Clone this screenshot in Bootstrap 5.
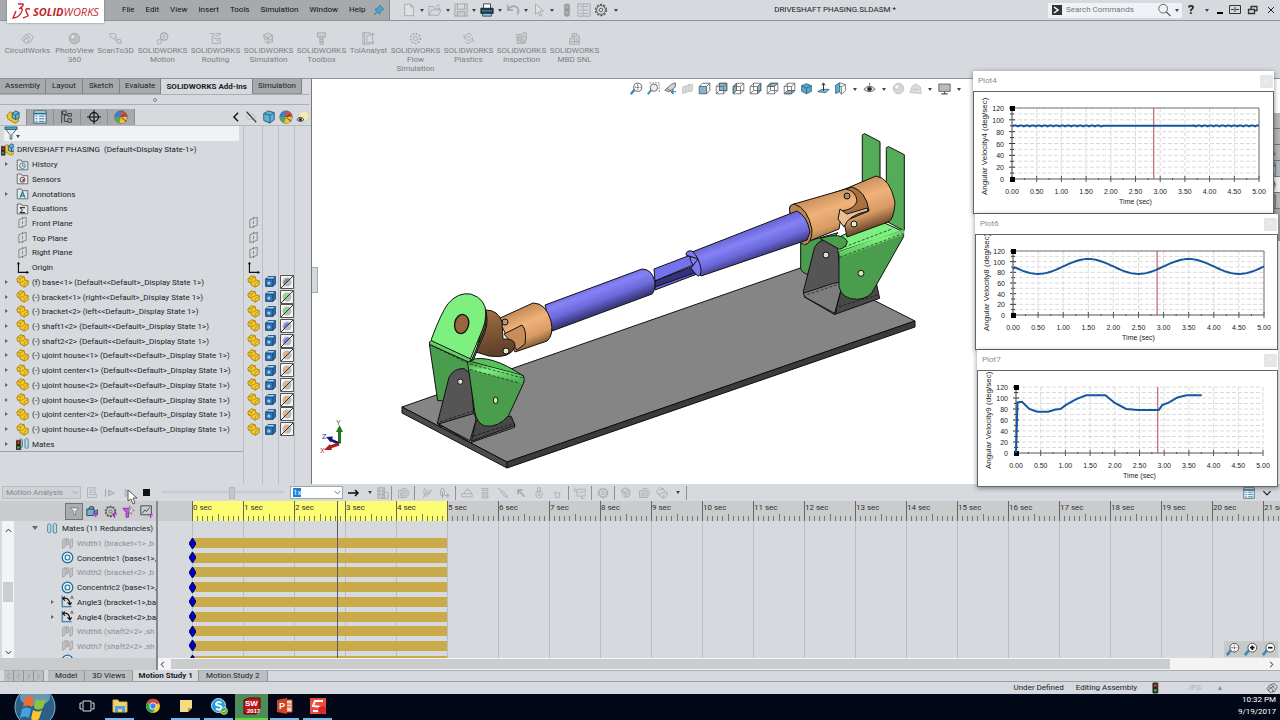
<!DOCTYPE html>
<html lang="en">
<head>
<meta charset="utf-8">
<meta name="viewport" content="width=device-width, initial-scale=1">
<title>DRIVESHAFT PHASING.SLDASM</title>
<link href="https://cdn.jsdelivr.net/npm/bootstrap@5.3.0/dist/css/bootstrap.min.css" rel="stylesheet">
<style>
:root{--face:#d6d9de;--dark:#a6aaac;--line:#8f9498;--ui:Roboto,"Liberation Sans",sans-serif}
body{font-family:var(--ui);font-size:8px;line-height:10px;color:#222;background:var(--face);overflow-x:hidden}
button,input,select{font:inherit;color:inherit}
.plain{border:0;background:none;padding:0;line-height:10px}
svg{display:block;flex:none}
.ic{width:14px;height:14px;fill:none;stroke:#555;stroke-width:1}
.off{opacity:.38}
.cell{width:13px;display:flex;align-items:center;justify-content:center}
.cell.wide{width:17px}
.cell.mid{width:18px}
.dd::after{content:"";display:block;border:2px solid transparent;border-top:3px solid #444;border-bottom:0}
a{color:inherit;text-decoration:none}

.topbar{height:21px;border-bottom:1px solid var(--line)}
.menus{width:390px;height:20px;background:var(--dark);border-right:1px solid #888;color:#111}
.brand{width:97px;height:23px;margin-left:7px;background:#fff;box-shadow:0 0 2px #777;color:#c4262c;font-family:"Open Sans",sans-serif;font-size:11px;line-height:14px;font-style:italic;z-index:2}
.menus nav{gap:11px;padding-left:18px}
.find{width:134px;height:15px;background:#eef1f5}
.find input{border:0;background:none;width:90px;padding:0;outline:0}
.help{font-size:13px;font-weight:700}
.ribbon{height:58px;border-bottom:1px solid var(--line);padding:11px 0 0 1px}
.ribbon button{width:53px;color:#7d8083;line-height:9px}
.ribbon button.slim{width:41px}
.ribbon .ic{opacity:.4}

.side{width:312px;border-right:1px solid #777}
.cmtabs{height:15px;padding-right:9px}
.cmtabs button{background:var(--dark);border-right:1px solid #7d8285;border-bottom:1px solid #8f9396;padding:0 5px}
.cmtabs button:nth-child(2),.cmtabs button:nth-child(3){padding:0 6px}
.cmtabs button.on{background:var(--face);border-bottom:0;font-weight:700;flex:1;padding:0}
.strip{height:11px;border-top:1px solid #a9afba;border-bottom:1px solid #a9afba;margin-right:2px}
.strip i{width:4px;height:4px;border:1px solid #888;border-radius:50%}
.fmtabs{height:21px;padding-top:4px;border-bottom:1px solid #b5b9bd}
.fmtabs .pt{width:27px;background:var(--dark);border-right:1px solid #8c9093}
.fmtabs .pt.on{background:var(--face)}
.cols{display:grid;grid-template-columns:243px 19px 16px 16px 17px}
.cols>*+*{border-left:1px solid #bcc0c5;display:flex;align-items:center;justify-content:center}
.filter{height:16px}
.filter input{border:0;outline:0;background:#f1f2f3;width:100%;padding:0 0 0 20px;height:15px}
.filter .dd{left:16px;top:9px}
.tree{height:309px}
.tree .cols{flex:1 1 0;min-height:0}
.tree .nm{display:flex;align-items:center;white-space:pre;min-width:0}
.tree .ic{width:13px;height:13px}
.tree .root{padding-left:1px}
.exp{width:16px;padding-left:5px}
.exp.has::before{content:"";display:block;width:0;border:2px solid transparent;border-left:3px solid #666;border-right:0}
.lbl{margin-left:3px;padding-top:2px}
.treeend{border-top:1px solid #9da0ae}
.handle{left:0;top:188px;width:6px;height:26px;background:var(--face);border:1px solid #aaa;border-left:0}

.view{background:#fff;min-width:0}
.headsup{height:20px}
.headsup .ic,.ribbon .ic{width:13px;height:13px;margin-bottom:1px}
.headsup .dd{width:12px}
.scene{width:100%;height:405px}
.taskpane{right:0;top:34px;width:18px;height:128px;background:var(--dark)}
.taskpane button{height:16px;border-bottom:1px solid #777;background:#b4b7ba;width:18px}
.taskpane button.on{background:#eee}
.plots{top:71px;right:2px;z-index:5}
.plotwin{background:#fff;box-shadow:0 1px 5px rgba(0,0,0,.45)}
.plotwin header{height:20px;padding:0 1px 0 5px;color:#8d8d8d}
.plotwin header button{width:13px;height:13px;background:#e6e6e6;color:#f4f4f4}
.plotwin .body{border:1px solid #666}
.plotwin svg{width:100%}
.plotwin text{font-family:"Liberation Sans",sans-serif;font-size:7px;fill:#222}
.plotwin text.yt{font-size:8px}

.mtool{height:17px;padding-left:2px}
.mtool .ic{width:12px;height:12px}
.mtool .sep{width:1px;height:14px;background:#8d9195;margin:0 2px}
.mtool select{appearance:none;border:1px solid #b8bbbf;background:#cfd2d6;color:#85888b;height:13px;width:79px;padding:0 3px;line-height:10px}
.mtool select.rate{width:53px;background:#fff;border-color:#9aa;color:#222}
.pick{margin-right:2px}
.mtool .pick .ic{position:absolute;right:1px;top:2px;width:9px;height:9px}
.sel{position:absolute;left:3px;top:2px;background:#1a7fd6;color:#fff;line-height:9px}
.mtool input{appearance:none;width:122px;height:3px;margin:0 6px 0 7px;background:#cdd0d5;border-top:1px solid #c3c6ca}
.mtool input::-webkit-slider-thumb{appearance:none;width:6px;height:12px;background:#c3c6ca;border:1px solid #b7babd}
.mouse{left:8px;top:2px;width:11px;height:16px;z-index:4}
.mt{width:158px;border-right:2px solid #85898e}
.mthead{height:20px;background:#cbcccd;padding-left:65px}
.mthead .ic{width:13px;height:13px}
.mthead .cell.on{background:#aaadb0;border:1px solid #707579;width:18px;height:17px}
.clip{height:137px;overflow:hidden}
.rows{height:147px;display:flex;flex-direction:column}
.rows>div{flex:1 1 0;min-height:0}
.mt .rows>div{display:flex;align-items:center;white-space:pre;overflow:hidden}
.mt .rows{width:142px;overflow:hidden}
.mt .rows .ic{width:13px;height:13px}
.mt .exp{width:13px;padding-left:3px;flex:none}
.in0,.in1{width:16px;flex:none}.in1{width:34px}
.mt .in0+.exp{width:16px;padding-left:2px}
.dim{color:#8b8e92}
.vs{width:12px;margin-left:2px;background:#f2f3f4}
.vs i{width:10px;height:20px;background:#cbcdcf;margin-top:46px}
.vs .ic,.hs .ic{width:9px;height:11px}
.mfoot{height:12px;background:#c9cbcd}
.tl{min-width:0}
.ruler{height:20px;background:#cacbcc;padding-left:34px;overflow:hidden}
.sec{width:51px;flex:none;border-left:1px solid #666;line-height:12px;white-space:nowrap;height:20px;padding-top:1px;color:#333}
.sec.y{background:#fdfd74}
.sec svg{width:50px;height:7px;stroke:#77776a}
.grid{left:34px;top:0;bottom:0;right:0;overflow:hidden}
.grid i{width:51px;flex:none;border-left:1px solid #b9bec3}
.bar{height:10px;background:#c9ab49;width:255px;margin-left:34px}
.key{left:31px;width:7px;height:11px;fill:#0000c8;stroke:#000060}
.head{width:1px;top:0;bottom:0;background:#5d5a62}
.zooms{right:2px;bottom:1px;width:54px;height:16px;background:#c6c8ca}
.hs{height:12px;background:#f4f4f4}
.hs i{background:#cbcccd;height:10px;width:89%}
.shtabs{height:12px;border-bottom:1px solid #9aa0a5}
.shtabs .rail{border-top:1px solid #a9adb0}
.shtabs button{background:#bcbfc1;border-right:1px solid #8f9396;border-top:1px solid #a9adb0;padding:0 7px}
.shtabs button.on{background:var(--face);font-weight:700;padding:0 5px;border-top:0}
.shtabs button.nv{width:10px;padding:0;color:#888}
.shtabs .ic{width:9px;height:9px}
.status{height:12px;padding-right:2px;gap:12px}
.status .ic{width:12px;height:12px}
.units{margin:0 5px 0 16px}
.tri{margin-right:32px}
.task{height:26px;background:#020818;color:#fff}
.task .orbwrap{width:70px;padding-left:14px;overflow:hidden}
.task .orbwrap svg{margin-top:-8px}
.task .app{width:33px;border-bottom:2px solid transparent}
.task .app.run{border-image:linear-gradient(90deg,transparent 10%,#76b9ed 10% 90%,transparent 90%) 1}
.task .app.cur{background:#4c8c5a;border-bottom-color:#5fd83c}
.task .ic{width:18px;height:18px}
.clock{line-height:12px}
</style>
</head>
<body class="d-flex flex-column min-vh-100">

<svg width="0" height="0" class="position-absolute" aria-hidden="true">
<defs>
<linearGradient id="gb" gradientUnits="userSpaceOnUse" x1="588" y1="285" x2="598" y2="312"><stop offset="0" stop-color="#6a67d8"/><stop offset=".3" stop-color="#8482f6"/><stop offset=".65" stop-color="#6c6ada"/><stop offset="1" stop-color="#3b3980"/></linearGradient>
<linearGradient id="gb2" gradientUnits="userSpaceOnUse" x1="748" y1="231" x2="758" y2="258"><stop offset="0" stop-color="#6a67d8"/><stop offset=".3" stop-color="#8482f6"/><stop offset=".65" stop-color="#6c6ada"/><stop offset="1" stop-color="#3b3980"/></linearGradient>
<linearGradient id="go" gradientUnits="userSpaceOnUse" x1="525" y1="308" x2="541" y2="346"><stop offset="0" stop-color="#c98d58"/><stop offset=".35" stop-color="#efb27a"/><stop offset=".7" stop-color="#d79a63"/><stop offset="1" stop-color="#6d4a2c"/></linearGradient>
<linearGradient id="go2" gradientUnits="userSpaceOnUse" x1="832" y1="190" x2="848" y2="236"><stop offset="0" stop-color="#c98d58"/><stop offset=".35" stop-color="#efb27a"/><stop offset=".7" stop-color="#d79a63"/><stop offset="1" stop-color="#6d4a2c"/></linearGradient>
<linearGradient id="gy" x1="0" y1="0" x2=".2" y2="1"><stop offset="0" stop-color="#a57144"/><stop offset="1" stop-color="#5f4028"/></linearGradient>
<linearGradient id="gg" x1="0" y1="0" x2=".25" y2="1"><stop offset="0" stop-color="#3b8a3f"/><stop offset=".45" stop-color="#7df07f"/><stop offset="1" stop-color="#4fb553"/></linearGradient>
</defs>
<symbol id="dn" viewBox="0 0 10 10"><path d="M2 3.500l3 3 3-3"/></symbol>
<symbol id="up" viewBox="0 0 10 10"><path d="M2 6.500l3-3 3 3"/></symbol>
<symbol id="lt" viewBox="0 0 10 10"><path d="M6.500 2l-3 3 3 3"/></symbol>
<symbol id="rt" viewBox="0 0 10 10"><path d="M3.500 2l3 3-3 3"/></symbol>
<symbol id="new" viewBox="0 0 16 16"><path d="M3 1.500h7l3 3v10H3zM10 1.500v3h3" fill="#eee"/></symbol>
<symbol id="open" viewBox="0 0 16 16"><path d="M1 14V4h5l1 2h6v2M1 14l3-6h11l-3 6zM9 3q3-2 5 1"/></symbol>
<symbol id="save" viewBox="0 0 16 16"><path d="M1 1h14v14H1zM4 1v6h8V1M4 15v-5h8v5" fill="#bbb"/></symbol>
<symbol id="print" viewBox="0 0 16 16"><path d="M4 6V1h8v5" fill="#fff" stroke="#333"/><path d="M1 6h14v6H1z" fill="#234" stroke="#123"/><path d="M2 9h12" stroke="#4fb3d6"/><path d="M3 12h10v3H3z" fill="#8cc8e0" stroke="#345"/></symbol>
<symbol id="undo" viewBox="0 0 16 16"><path d="M2 2v6h6M2.500 7.500Q6 2 11 4t2 9" stroke-width="2"/></symbol>
<symbol id="arrow" viewBox="0 0 16 16"><path d="M4 1v12l3-3 2 5 2-1-2-5h4z" fill="#eee"/></symbol>
<symbol id="light" viewBox="0 0 16 16"><rect x="5" y="1" width="6" height="14" rx="2" fill="#333"/><circle cx="8" cy="4.500" r="1.500" fill="#999"/><circle cx="8" cy="11" r="1.500" fill="#999"/></symbol>
<symbol id="lightc" viewBox="0 0 16 16"><rect x="5" y="1" width="7" height="14" rx="1" fill="#222"/><circle cx="8.500" cy="4.500" r="2" fill="#d33" stroke="none"/><circle cx="8.500" cy="11" r="2" fill="#3a3" stroke="none"/></symbol>
<symbol id="opts" viewBox="0 0 16 16"><path d="M1 1h14v14H1zM3 4h3M3 8h3M3 12h3M8 4h5M8 8h5M8 12h5M7 1v14"/></symbol>
<symbol id="gear" viewBox="0 0 16 16"><circle cx="8" cy="8" r="6.300" stroke-dasharray="2.500 1.450" stroke-width="1.500"/><circle cx="8" cy="8" r="5"/><circle cx="8" cy="8" r="2"/></symbol>
<symbol id="pin" viewBox="0 0 16 16"><path d="M9 1l6 6-2 1-3 3-1 3-3-3-5 4 4-5-3-3 3-1 3-3z" fill="#49a3cf" stroke="#2a7aa8"/></symbol>
<symbol id="mag" viewBox="0 0 16 16"><circle cx="7" cy="6.500" r="5"/><path d="M10.500 10l5 5" stroke-width="1.500"/></symbol>
<symbol id="chip" viewBox="0 0 16 16"><path d="M1 9l4-5 6-2 4 4-3 6-6 2zM4 6l6 5M7 4l5 5M3 10l8-5M4 13v-3M9 14v-3"/></symbol>
<symbol id="ball" viewBox="0 0 16 16"><circle cx="8" cy="8" r="6.500" fill="#999"/><circle cx="6" cy="6" r="3" fill="#eee"/></symbol>
<symbol id="scan" viewBox="0 0 16 16"><path d="M1 2h6l2 4-3 3-4-3zM7 7l5 5M9 9h5l1 5h-4l-3-3z"/></symbol>
<symbol id="motion" viewBox="0 0 16 16"><circle cx="10" cy="5.500" r="4.500" stroke-width="1.500"/><circle cx="10" cy="5.500" r="1.500"/><circle cx="4" cy="12" r="2.800"/><path d="M7 9l-1 1"/></symbol>
<symbol id="route" viewBox="0 0 16 16"><path d="M1 2h5v3H4v9h10V8h-4v3h2M8 2h7M8 5h4l2-3M6 8h3"/></symbol>
<symbol id="sim" viewBox="0 0 16 16"><path d="M2 4l5-3 6 3v4l-3 2-3-2-4 1zM7 8v6l6-2V8M2 4l5 3 6-3M7 14l-4-3" fill="#bbb"/></symbol>
<symbol id="bolt" viewBox="0 0 16 16"><path d="M3 1h10v5H3zM6 6v9h4V6M6 9h4M6 12h4" fill="#bbb"/></symbol>
<symbol id="tol" viewBox="0 0 16 16"><path d="M1 1h9v3H6v9h4v2H1V1M13 2v12M11 4l2-3 2 3M11 12l2 3 2-3M3 1v14"/></symbol>
<symbol id="flow" viewBox="0 0 16 16"><circle cx="8" cy="8" r="2.500"/><circle cx="8" cy="8" r="6" stroke-dasharray="2 2" stroke-width="2"/></symbol>
<symbol id="plas" viewBox="0 0 16 16"><path d="M3 9A6 6 0 0 1 9 2l3 2M13 7a6 6 0 0 1-6 7l-3-2M5 8l3-3 3 3-3 3zM1 4l3 2M15 12l-3-2"/></symbol>
<symbol id="insp" viewBox="0 0 16 16"><path d="M2 3h6l2-2h4v8l-2 5H3zM4 6h4v4H4zM9 5l4 1M9 8l4 5M6 12h5" fill="#bbb"/></symbol>
<symbol id="mbd" viewBox="0 0 16 16"><path d="M2 8h3V2h6v3h3v10H2zM5 8l2 2M8 4v9M11 7v6M2 12h12M5 5h4" fill="#ccc"/></symbol>
<symbol id="fold" viewBox="0 0 16 16"><path d="M1.500 14.500v-12h5l1 2h7v10z" fill="#e6e8ea"/></symbol>
<symbol id="hist" viewBox="0 0 16 16"><use href="#fold"/><circle cx="8" cy="9.500" r="3.500" stroke="#277a96"/><path d="M8 7v3h3M4 10l2 2" stroke="#277a96"/></symbol>
<symbol id="sens" viewBox="0 0 16 16"><use href="#fold"/><circle cx="8" cy="9.500" r="3" stroke="#222"/><circle cx="9" cy="10" r="1.300" fill="#c22" stroke="none"/></symbol>
<symbol id="anno" viewBox="0 0 16 16"><use href="#fold"/><path d="M5 13l3-7 3 7M6 11h4" stroke="#157c8c" stroke-width="1.500"/></symbol>
<symbol id="eqn" viewBox="0 0 16 16"><use href="#fold"/><path d="M11 7H5l3 3-3 3h6" stroke="#111" stroke-width="1.200"/></symbol>
<symbol id="plane" viewBox="0 0 16 16"><path d="M3.500 4.500l9-3v10l-9 3zM8 1v3M8 6v4M8 12v3" stroke="#777"/></symbol>
<symbol id="orig" viewBox="0 0 16 16"><path d="M3 2v12h12" stroke="#111" stroke-width="1.400"/><path d="M1 4l2-3 2 3zM13 12l3 2-3 2z" fill="#111" stroke="none"/></symbol>
<symbol id="part" viewBox="0 0 16 16"><path d="M1 5l4-4 5 1 1 4 4 1v5l-5 3-5-3v-3L2 9z" fill="#f7c92c" stroke="#9a7500"/><path d="M5 5l5-3M6 9l5-2M10 11l4-3M10 11v4M5 5v3M5 5L2 4" stroke="#a87f00" stroke-width=".8"/></symbol>
<symbol id="partg" viewBox="0 0 16 16"><path d="M1 5l4-4 5 1 1 4 4 1v5l-5 3-5-3v-3L2 9zM5 5l5-3M6 9l5-2M10 11l4-3M10 11v4"/></symbol>
<symbol id="assy" viewBox="0 0 16 16"><path d="M1 6l4-4 4 2v4l5 1v4l-4 2-8-5z" fill="#f5c92c" stroke="#9a7500"/><path d="M7 4l4-3 4 2v6l-4 2-4-2z" fill="#69b4d8" stroke="#1d5873"/><path d="M7 4l4 2 4-3M11 6v5" stroke="#1d5873"/></symbol>
<symbol id="root" viewBox="0 0 16 16"><use href="#assy" x="2"/><rect x="0" y="4" width="5" height="11" fill="#222"/><circle cx="2.500" cy="7" r="1.500" fill="#e22" stroke="none"/><circle cx="2.500" cy="12" r="1.500" fill="#3a3" stroke="none"/></symbol>
<symbol id="cube" viewBox="0 0 16 16"><path d="M2 5l3-3h9v9l-3 3H2z" fill="#2d75b8" stroke="#0d3a66"/><path d="M2 5h9v9M11 5l3-3" stroke="#0d3a66"/><path d="M3 4l2-1.500h8L11 4.500z" fill="#9ad1f3" stroke="none"/><circle cx="6" cy="10" r="1.300" stroke="#fff"/></symbol>
<symbol id="cubel" viewBox="0 0 16 16"><path d="M2 4l5-3 7 2v8l-5 4-7-3z" fill="#5eb2d8" stroke="#235a72"/><path d="M2 4l7 2 5-3M9 6v9" stroke="#235a72"/></symbol>
<symbol id="style" viewBox="0 0 16 16"><path d="M2 4l5-3v11l-5 2z" fill="#5eb2d8" stroke="#235a72"/><path d="M7 1l7 2v8l-5 4-2-3M7 5l2 1 5-3M9 6v9" stroke="#666"/></symbol>
<symbol id="sheet" viewBox="0 0 16 16"><path d="M1 1h14v14H1z" fill="#eef" stroke="#356"/><path d="M1 4h14" stroke="#178" stroke-width="2"/><path d="M3 7h2M3 10h2M3 13h2M7 7h6M7 10h6M7 13h6" stroke="#178"/></symbol>
<symbol id="conf" viewBox="0 0 16 16"><path d="M3 1h4v4H3zM9 4h4v3H9zM9 10h4v4H9zM5 5v8h4M5 6h4M2 1v14" stroke="#333"/></symbol>
<symbol id="cross" viewBox="0 0 16 16"><circle cx="8" cy="8" r="5" stroke="#111" stroke-width="1.300"/><path d="M8 0v16M0 8h16" stroke="#111" stroke-width="1.300"/></symbol>
<symbol id="disp" viewBox="0 0 16 16"><circle cx="8" cy="8" r="7" fill="#e84a3c" stroke="#555"/><path d="M8 8V1a7 7 0 0 0-7 7z" fill="#3e7fd0" stroke="none"/><path d="M8 8H1a7 7 0 0 0 5 6.700z" fill="#53ad46" stroke="none"/><path d="M8 8l-2 6.700A7 7 0 0 0 15 8z" fill="#f2c52e" stroke="none"/><path d="M8 8l5-3M9 9l5 4" stroke="#333"/></symbol>
<symbol id="hide" viewBox="0 0 16 16"><path d="M2 8q6-7 12 0-6 6-12 0" stroke="#bbb"/><path d="M3 2l11 12" stroke="#333" stroke-width="1.300"/></symbol>
<symbol id="trans" viewBox="0 0 16 16"><circle cx="9" cy="7" r="6" fill="#f1ecb0" stroke="#ccc"/><path d="M1 11q4-5 8 0-4 4-8 0" fill="#fff" stroke="#222"/><circle cx="5" cy="11" r="1.500" fill="#111"/></symbol>
<symbol id="mates" viewBox="0 0 16 16"><path d="M2 4q2-4 4 0v8q-2 3-4 0zM9 3q2-3 4 0v10q-2 2-4 0z" fill="#b9dbe6" stroke="#41788c"/></symbol>
<symbol id="mates2" viewBox="0 0 16 16"><use href="#mates" x="2"/><rect x="0" y="4" width="6" height="12" fill="#222"/><circle cx="3" cy="7" r="1.700" fill="#e22" stroke="none"/><circle cx="3" cy="13" r="1.700" fill="#2c2" stroke="none"/></symbol>
<symbol id="funnel" viewBox="0 0 16 16"><path d="M1.500 2h13L10 8v6H7V8z" fill="#f4f4f4"/></symbol>
<symbol id="funb" viewBox="0 0 16 16"><path d="M1 1h14v3H1z" fill="#4ea2c4" stroke="#267"/><path d="M2 4h12L9 10v5H7v-5z" fill="#e8eef2" stroke="#456"/></symbol>
<symbol id="zfit" viewBox="0 0 16 16"><path d="M1 15l5-6" stroke="#3b8db0" stroke-width="3"/><circle cx="9.500" cy="6.500" r="5" fill="#fff" stroke="#444"/><path d="M9.500 3v7M6 6.500h7" stroke="#444" stroke-dasharray="2 1"/></symbol>
<symbol id="zarea" viewBox="0 0 16 16"><path d="M1 15l5-6" stroke="#3b8db0" stroke-width="2.500"/><circle cx="8.500" cy="7" r="4.500" fill="#eee" stroke="#555"/><path d="M3 1h12v12" stroke="#666" stroke-dasharray="2 1.500"/></symbol>
<symbol id="zin" viewBox="0 0 16 16"><path d="M1 15l5-6" stroke="#3b8db0" stroke-width="3"/><circle cx="9.500" cy="6.500" r="5" fill="#fff" stroke="#444"/><path d="M9.500 4v5M7 6.500h5" stroke="#111" stroke-width="2"/></symbol>
<symbol id="zout" viewBox="0 0 16 16"><path d="M1 15l5-6" stroke="#3b8db0" stroke-width="3"/><circle cx="9.500" cy="6.500" r="5" fill="#fff" stroke="#444"/><path d="M7 6.500h5" stroke="#111" stroke-width="2"/></symbol>
<symbol id="prev" viewBox="0 0 16 16"><path d="M1 10l8-7 5-2v5l-8 6zM4 8l4 3" fill="#d5d5d5"/><path d="M15 12H9M12 9l-3 3 3 3" stroke="#2581a8" stroke-width="1.500"/></symbol>
<symbol id="sect" viewBox="0 0 16 16"><path d="M2 6l4-1v8l-4 1zM6 5l4-2v8l-4 2M10 3h4v8l-4 1" fill="#ddd" stroke="#bbb"/></symbol>
<symbol id="cb" viewBox="0 0 16 16"><path d="M1.500 5.500h9v9h-9zM5.500 1.500h9v9h-9zM1.500 5.500l4-4M10.500 5.500l4-4M1.500 14.500l4-4M10.500 14.500l4-4" stroke="#666"/></symbol>
<symbol id="c1" viewBox="0 0 16 16"><path d="M1.500 5.500h9v9h-9z" fill="#7fb9d3"/><path d="M1.500 5.500l4-4h9v9l-4 4M10.500 5.500l4-4" stroke="#456"/></symbol>
<symbol id="c2" viewBox="0 0 16 16"><path d="M5.500 1.500h9v9h-9z" fill="#7fb9d3"/><use href="#cb"/></symbol>
<symbol id="c3" viewBox="0 0 16 16"><path d="M1.500 5.500l4-4v9l-4 4z" fill="#7fb9d3"/><use href="#cb"/></symbol>
<symbol id="c4" viewBox="0 0 16 16"><path d="M10.500 5.500l4-4v9l-4 4z" fill="#7fb9d3"/><use href="#cb"/></symbol>
<symbol id="c5" viewBox="0 0 16 16"><path d="M1.500 5.500l4-4h9l-4 4z" fill="#7fb9d3"/><use href="#cb"/></symbol>
<symbol id="c6" viewBox="0 0 16 16"><path d="M1.500 14.500l4-4h9l-4 4z" fill="#7fb9d3"/><use href="#cb"/></symbol>
<symbol id="iso" viewBox="0 0 16 16"><path d="M2 4.500L8 2l6 2.500v7L8 14.500l-6-3z" fill="#5ba7cb" stroke="#2a617c"/><path d="M2 4.500L8 7.500l6-3M8 7.500v7" stroke="#2a617c"/></symbol>
<symbol id="norm" viewBox="0 0 16 16"><path d="M1 12l5-3h9l-4 4z" fill="#7fb9d3" stroke="#2a617c"/><path d="M8 11V2M6 4l2-3 2 3" stroke="#333" stroke-width="1.200"/></symbol>
<symbol id="eye" viewBox="0 0 16 16"><path d="M1 9q7-8 14 0-7 6-14 0" fill="#ddd"/><circle cx="8" cy="8.500" r="2.500" fill="#222"/><path d="M8 4V1"/></symbol>
<symbol id="scn" viewBox="0 0 16 16"><path d="M1 13l3-8 4-3 6 4 1 8zM4 9h8" fill="#ddd" stroke="#bbb"/></symbol>
<symbol id="mon" viewBox="0 0 16 16"><path d="M1 2.500h14v9H1z" fill="#b8bcbf"/><path d="M8 12v2M4 14.500h8" stroke-width="1.500"/></symbol>
<symbol id="calc" viewBox="0 0 16 16"><path d="M2 1h10v9M2 1v13h7M4 4h6M4 7h6M4 10h4"/><circle cx="12" cy="12" r="2.500"/></symbol>
<symbol id="pstart" viewBox="0 0 16 16"><path d="M2 3v10" stroke-width="1.500"/><path d="M6 4l8 4-8 4z" fill="#aaa"/></symbol>
<symbol id="play" viewBox="0 0 16 16"><path d="M4 3l9 5-9 5z" fill="#aaa"/></symbol>
<symbol id="cam" viewBox="0 0 16 16"><path d="M1 5h9v8H1zM10 8l4-2v6l-4-2M3 5l2-3h4l1 3" fill="#6bb0cd" stroke="#234"/><path d="M9 10h6M12 10v5" stroke="#a3c" stroke-width="1.500"/></symbol>
<symbol id="gearf" viewBox="0 0 16 16"><use href="#gear"/><path d="M10 11h6M13 11v5" stroke="#a3c" stroke-width="1.500"/></symbol>
<symbol id="funp" viewBox="0 0 16 16"><path d="M1 4h11l-4 5v6H5V9z" fill="#c05be0" stroke="#82a"/><path d="M9 1v10l2-2 1 3M9 1l6 6h-3" fill="#fff" stroke="#777"/></symbol>
<symbol id="grf" viewBox="0 0 16 16"><path d="M1 1h13v11H1zM3 10l3-4 2 2 4-5" stroke="#234"/><path d="M10 12h6M13 12v4" stroke="#a3c" stroke-width="1.500"/></symbol>
<symbol id="wid" viewBox="0 0 16 16"><path d="M2 4l3-2v10l-3 2zM7 3l2-1v7l-2 1zM11 4l3-2v10l-3 2zM5 3l2-1" stroke="#999" fill="#ccc"/></symbol>
<symbol id="conc" viewBox="0 0 16 16"><circle cx="8" cy="8" r="6.500" stroke="#1f6d97" stroke-width="1.500" fill="#e8f2f6"/><circle cx="8" cy="8" r="3" stroke="#1f6d97" stroke-width="1.300"/></symbol>
<symbol id="ang" viewBox="0 0 16 16"><path d="M1.500 1v13.500H13" stroke="#1f6d97" stroke-width="1.300"/><path d="M3 4q7-1 8 7M5 2L2 4l3 3M8 9l3 3 2-3" stroke="#111" stroke-width="1.400"/><path d="M12 5l1.500-4L15 5" stroke="#333" stroke-width=".8"/></symbol>
<symbol id="film" viewBox="0 0 16 16"><path d="M1 1h9v14H1zM1 5h9M1 10h9M3 1v14M8 1v14M7 7h8v8H7z" fill="#ccc"/></symbol>
<symbol id="box" viewBox="0 0 16 16"><path d="M2 5h10v9H2zM4 5l3-3h5l3 3v6l-3 3M5 8h4v4H5z" fill="#ccc"/></symbol>
<symbol id="leaf" viewBox="0 0 16 16"><path d="M4 15l4-9M8 13q-5-3-2-11 6 4 2 11zM10 10q1-5 5-6-1 6-5 6"/></symbol>
<symbol id="leafp" viewBox="0 0 16 16"><path d="M6 15V6M6 13Q0 8 6 1q6 7 0 12M13 8v7M9.500 11.500h6" stroke-width="1.300"/></symbol>
<symbol id="mot" viewBox="0 0 16 16"><path d="M1 9h14v4H1zM4 9q0-5 5-5t5 5M7 4l3-3"/></symbol>
<symbol id="spr" viewBox="0 0 16 16"><path d="M4 2h8v2.500H4zM4 7h8v2.500H4zM4 12h8v2.500H4z"/></symbol>
<symbol id="damp" viewBox="0 0 16 16"><path d="M1 1l5 5M5 7l2-2 6 6-2 2zM12 12l3 3" stroke-width="1.300"/></symbol>
<symbol id="frc" viewBox="0 0 16 16"><path d="M13 13L5 5M4 10V4h6" stroke-width="2"/></symbol>
<symbol id="con" viewBox="0 0 16 16"><path d="M6 1h4v5H6z"/><circle cx="8" cy="10" r="4.500"/><circle cx="8" cy="10" r="1.500"/></symbol>
<symbol id="grav" viewBox="0 0 16 16"><path d="M5 8h7l-1 6H6zM4 7l2-2"/></symbol>
<symbol id="res" viewBox="0 0 16 16"><path d="M4 3h11v9H4zM6 9l3-3 2 2 3-3M1 1v5h3M10 12v3h4"/></symbol>
<symbol id="orb" viewBox="0 0 42 42"><circle cx="21" cy="21" r="20" fill="#2c5f86" stroke="#7fb6d8"/><ellipse cx="21" cy="11" rx="15" ry="9" fill="#8dbcd6" opacity=".6" stroke="none"/><path d="M11 12q5-4 9 0l-2 9q-4-3-9 0z" fill="#ee6c35" stroke="none"/><path d="M22 13q5 3 10 0l-3 9q-5 3-9 0z" fill="#8cc63e" stroke="none"/><path d="M8 23q5-3 9 0l-2 9q-4-3-9 0z" fill="#3fa4e0" stroke="none"/><path d="M19 24q5 3 9 0l-3 9q-4 3-8 0z" fill="#fcc62d" stroke="none"/></symbol>
<symbol id="tv" viewBox="0 0 18 18"><path d="M5 4h8v10H5zM4 6H2v6h2M14 6h2v6h-2" stroke="#ddd"/></symbol>
<symbol id="expl" viewBox="0 0 18 18"><path d="M2 3h5l1 2h8v10H2z" fill="#f3d070" stroke="#d9b14a"/><path d="M4 15V9h10v6h-3v-3H7v3z" fill="#4aa3df" stroke="none"/></symbol>
<symbol id="chr" viewBox="0 0 18 18"><g stroke="none"><circle cx="9" cy="9" r="7" fill="#f6c92b"/><path d="M9 9L3 5.400A7 7 0 0 1 15.500 6z" fill="#dc4437"/><path d="M9 9L3 5.400A7 7 0 0 0 8.500 16l3-5z" fill="#2fa35a"/><circle cx="9" cy="9" r="3.500" fill="#fff"/><circle cx="9" cy="9" r="2.700" fill="#3f83f0"/></g></symbol>
<symbol id="note" viewBox="0 0 18 18"><path d="M3 3h12v8l-4 4H3z" fill="#f4dc80" stroke="none"/><path d="M15 11h-4v4z" fill="#b8963a" stroke="none"/></symbol>
<symbol id="sky" viewBox="0 0 18 18"><circle cx="8.500" cy="8.500" r="7" fill="#1e9fe0" stroke="#bfe4f7"/><path d="M11.500 6q-3-2-5 0t2 2.500 2.500 3-5 0" stroke="#fff" stroke-width="1.800"/><circle cx="14" cy="14" r="3.500" fill="#5aa52d" stroke="#fff" stroke-width=".6"/><path d="M12.500 14l1 1 2-2" stroke="#fff"/></symbol>
</svg>

<header class="topbar d-flex align-items-center">
  <div class="menus d-flex align-items-center">
    <a href="#" class="brand d-flex align-items-center align-self-start ps-1">
      <svg width="22" height="20" viewBox="0 0 22 20" fill="none" stroke="#c4262c" stroke-width="1.400"><path d="M7 2h5q1 2-4 5M9 6q4 0 1 5t-8 5l3-7M19 7q-5-1-4 2t2 4-5 3"/></svg>
      <span><b>SOLID</b>WORKS</span>
    </a>
    <nav class="d-flex"><a href="#">File</a><a href="#">Edit</a><a href="#">View</a><a href="#">Insert</a><a href="#">Tools</a><a href="#">Simulation</a><a href="#">Window</a><a href="#">Help</a></nav>
    <button class="plain cell ms-auto me-1" aria-label="Pin"><svg class="ic" viewBox="-2 -2 20 20"><use href="#pin" width="16" height="16"/></svg></button>
  </div>
  <div class="d-flex align-items-center ps-2 ms-1" id="quick"></div>
  <div class="flex-fill text-center">DRIVESHAFT PHASING.SLDASM *</div>
  <div class="find d-flex align-items-center">
    <svg class="mx-1" width="10" height="10" viewBox="0 0 10 10"><rect width="10" height="10" fill="#333"/><path d="M2 2l4 3-4 3" fill="none" stroke="#fff" stroke-width="1.500"/></svg>
    <input aria-label="Search Commands" placeholder="Search Commands">
    <button class="plain cell mid" aria-label="Search"><svg class="ic"><use href="#mag"/></svg></button><span class="dd cell"></span>
  </div>
  <button class="plain cell mid help">?</button><span class="dd cell"></span>
  <button class="plain cell" aria-label="Minimize"><svg width="8" height="8"><path d="M1 6h6v2H1z"/></svg></button>
  <button class="plain cell mid" aria-label="Span"><svg class="ic" viewBox="0 0 14 14"><path d="M1.500 2.500h11v8h-11zM3 6.500h3M8 6.500h3M7 4v5" stroke="#333"/></svg></button>
  <button class="plain cell mid" aria-label="Restore"><svg class="ic" viewBox="0 0 14 14"><path d="M2.500 6.500h6v4h-6zM5 6V3.500h6v4H9" stroke="#333" stroke-width="1.300"/></svg></button>
  <button class="plain cell mid" aria-label="Close"><svg class="ic" viewBox="0 0 14 14"><path d="M4 4l6 6M10 4l-6 6" stroke="#222"/></svg></button>
</header>

<div class="ribbon d-flex align-items-start" id="ribbon"></div>

<main class="d-flex flex-grow-1">
  <aside class="side d-flex flex-column flex-shrink-0">
    <div class="cmtabs d-flex"><button class="plain">Assembly</button><button class="plain">Layout</button><button class="plain">Sketch</button><button class="plain">Evaluate</button><button class="plain on">SOLIDWORKS Add-Ins</button><button class="plain">Simulation</button></div>
    <div class="strip d-flex align-items-center justify-content-center"><i></i></div>
    <div class="fmtabs d-flex">
      <button class="plain pt cell on" aria-label="Feature tree"><svg class="ic"><use href="#assy"/></svg></button>
      <button class="plain pt cell" aria-label="Properties"><svg class="ic"><use href="#sheet"/></svg></button>
      <button class="plain pt cell" aria-label="Configurations"><svg class="ic"><use href="#conf"/></svg></button>
      <button class="plain pt cell" aria-label="DimXpert"><svg class="ic"><use href="#cross"/></svg></button>
      <button class="plain pt cell" aria-label="Display"><svg class="ic"><use href="#disp"/></svg></button>
      <button class="plain cell ms-auto" aria-label="Collapse"><svg class="ic"><use href="#lt" stroke="#111"/></svg></button>
      <span class="cell mid"><svg class="ic"><use href="#hide"/></svg></span><span class="cell wide"><svg class="ic"><use href="#cubel"/></svg></span><span class="cell wide"><svg class="ic"><use href="#disp"/></svg></span><span class="cell wide"><svg class="ic"><use href="#trans"/></svg></span>
    </div>
    <div class="filter cols"><div class="position-relative ps-1 pe-1"><input aria-label="Filter"><svg class="ic position-absolute top-0 start-0 ms-1"><use href="#funb"/></svg><span class="dd position-absolute"></span></div><span></span><span></span><span></span><span></span></div>
    <div class="tree d-flex flex-column" id="tree"></div>
    <div class="cols flex-grow-1"><div class="treeend"></div><span></span><span></span><span></span><span></span></div>
  </aside>

  <section class="view flex-grow-1 position-relative">
    <div class="headsup d-flex align-items-center justify-content-center position-absolute top-0 start-0 end-0" id="headsup"></div>
    <span class="handle position-absolute"></span>
    <svg class="scene" viewBox="312 79 968 405" preserveAspectRatio="xMinYMin meet" stroke="#111" stroke-width="1" stroke-linejoin="round" fill="none">
      <path d="M402 407L507 462 915 321 806 266z" fill="#858585"/>
      <path d="M402 407v6L507 468v-6z" fill="#4c4c4c"/><path d="M507 462v6L915 327v-6z" fill="#3b3b3b"/>
      <!-- driven end bracket and yoke -->
      <g transform="translate(640 120) scale(.3333)" stroke-width="3">
        <path d="M667 45l52 24v110l-52 20z" fill="#55ac58"/><path d="M667 45l7-4 46 24v110" fill="#55ac58"/>
        <path d="M739 83l52 24v225l-52-28z" fill="#55ac58"/><path d="M739 83l7-3 47 24v225l-4 8" fill="#55ac58"/>
        <path d="M482 370v75q4 15 22 18l60-90 30-35z" fill="#4a9d4d"/>
        <path d="M600 350l110-52 82 38-192 78-30-60z" fill="#7df07f"/>
        <path d="M490 515l34-133q15-28 45-20 24 8 26 38l10 98-110 34z" fill="#555"/>
        <path d="M490 520l90-30 30-5-26 95-88-48z" fill="#7d7d7d"/>
        <path d="M585 583l20-80 105-10 9 42z" fill="#484848"/><path d="M492 530l92 54 6-12" />
        <path d="M597 395v105q8 38 55 38 38-2 52-34l87-154v-18z" fill="#4a9d4d"/>
        <path d="M597 395l190-66q8 0 4 14l-190 72z" fill="url(#gg)" stroke="none"/>
        <path d="M600 412l190-72M600 386l158-60M502 524l90-30M597 560l120-36" stroke-dasharray="9 5" stroke-width="2"/>
        <path d="M540 355q65-20 82 8-2 20-24 25z" fill="#4a9d4d"/>
        <circle cx="558" cy="405" r="9" fill="#ddd"/><circle cx="663" cy="460" r="9" fill="#cde8b0"/>
      </g>
      <path d="M838 192L876 176q14 2 19 26-1 18-7 20l-41 15z" fill="url(#go2)"/>
      <path d="M852 187q14 4 17 24l-24 10-12-28z" fill="#a8713f"/>
      <path d="M790 213q-2-8 4-9l52-15q10 2 11 12-2 8-15 10l-3 18-37 15q-8-4-12-14z" fill="url(#go2)"/>
      <path d="M790 213q-2-8 4-9 14 4 18 26 0 14-8 15" fill="#b98450"/>
      <path d="M840 209l-2 10 6 8q4-12 24-16l-1-3-20 6z" fill="#e8bd92"/><circle cx="847" cy="196" r="3" fill="#a86"/><circle cx="854" cy="224" r="3" fill="#e5eacb"/>
      <!-- shafts -->
      <path d="M654 269L688 256 700 262 655 281z" fill="#7472ea"/><path d="M655 281L699 264 697 274 655 287z" fill="#34327c"/>
      <path d="M655 287L697 272v2L655 290z" fill="#6664d4"/>
      <path d="M545 305L642 269q10 0 13 13 0 9-3 12L552 331z" fill="url(#gb)"/>
      <path d="M692 252L797 211q10 5 13 21l-3 8-106 36q-8-8-11-17z" fill="url(#gb2)"/>
      <path d="M686 255q0-5 6-4 7 6 9 18 0 7-3 7-3-2-7-8l7-9z" fill="#7b78f0"/>
      <!-- driving end bracket and yoke -->
      <path d="M498 319L533 303q13 0 18 18 3 14-4 20L515 352z" fill="url(#go)"/>
      <path d="M504 334l18-9q5 5 3 19l-8 6z" fill="#c78c57"/><circle cx="505" cy="322" r="3" fill="#a97"/>
      <path d="M476 352l10-42q12 0 16 12l1 17q13-1 12 8-5 12-26 9z" fill="url(#gy)"/><circle cx="506" cy="351" r="3" fill="#e5eacb"/>
      <g transform="translate(390 280) scale(.3333)" stroke-width="3">
        <path d="M118 192l120 50 12 160-95-40-12 0z" fill="#4a9d4d"/>
        <path d="M240 240q60-20 160 48l-150 12z" fill="#57c25a"/>
        <path d="M142 430l35-138q15-28 45-26l20 15 10 130-100 30z" fill="#555"/>
        <path d="M145 432l108-32 5 20-18 62z" fill="#7d7d7d"/><path d="M244 484l14-62 105-14 12 28z" fill="#484848"/>
        <path d="M142 430l100 58 132-46v-8"/>
        <path d="M232 242l168 45q6 10 0 24l-44 95q-30 38-72 32-24-8-30-44z" fill="#4a9d4d"/>
        <path d="M234 244l160 42q12 14 0 26l-156-44z" fill="url(#gg)" stroke="none"/>
        <path d="M124 178q30-80 50-107 30-35 68-29 46 14 46 60-2 30-12 50l-36 88-114-52z" fill="#7df07f"/>
        <path d="M288 95q2 40-8 62l-36 85 6-2 34-82q12-34 4-63z" fill="#3b8a3f"/>
        <path d="M118 186l6-4 120 56-8 8-116-52z" fill="#65d068"/>
        <ellipse cx="215" cy="132" rx="21" ry="29" transform="rotate(12 215 132)" fill="#96663f" stroke-width="4"/>
        <path d="M124 196l106 52M240 252l158 42M240 268l150 42M150 425l100-32M250 468l122-38" stroke-dasharray="9 5" stroke-width="2"/>
        <circle cx="211" cy="305" r="8" fill="#ddd"/><ellipse cx="317" cy="361" rx="7" ry="10" fill="#cde8b0"/>
      </g>
      <!-- axis triad -->
      <g stroke-width="2"><path d="M339.500 443.500V430" stroke="#1c7a1c" stroke-width="3"/><path d="M336 432l3.500-7 3.500 7z" fill="#1c7a1c" stroke="none"/><path d="M339 443.500l-9-4" stroke="#14148a" stroke-width="3"/><path d="M326 437l7-.500-2 6z" fill="#14148a" stroke="none"/><path d="M339 444l-9 3" stroke="#b01c1c" stroke-width="3"/><path d="M324 450l6-6 2 6z" fill="#b01c1c" stroke="none"/></g>
      <g stroke="none" font-family="Liberation Sans, sans-serif" font-size="7"><text x="336" y="425" fill="#1c7a1c">Y</text><text x="322" y="439" fill="#14148a">Z</text><text x="320" y="453" fill="#b01c1c">X</text></g>
    </svg>
    <div class="taskpane position-absolute d-flex flex-column" id="pane"></div>
  </section>
</main>

<div class="plots position-absolute d-flex flex-column align-items-end" id="plots"></div>

<section>
  <div class="mtool d-flex align-items-center">
    <label class="pick position-relative d-flex"><select aria-label="Study type"><option>Motion Analysis</option></select><svg class="ic off"><use href="#dn"/></svg></label>
    <div class="d-flex align-items-center" id="mt1"></div>
    <input type="range" min="0" max="100" value="58" aria-label="Time slider">
    <label class="pick position-relative d-flex"><select class="rate" aria-label="Playback speed"><option></option></select><span class="sel">1x</span><svg class="ic"><use href="#dn"/></svg></label>
    <div class="d-flex align-items-center" id="mt2"></div>
    <button class="plain cell mid ms-auto" aria-label="Timeline view"><svg class="ic"><use href="#sheet"/></svg></button>
    <button class="plain cell mid me-1" aria-label="Collapse MotionManager"><svg class="ic"><use href="#dn" stroke="#222"/></svg></button>
  </div>
  <div class="d-flex">
    <div class="mt flex-shrink-0">
      <div class="mthead d-flex align-items-center">
        <button class="plain cell on" aria-label="No filter"><svg class="ic" viewBox="-3 -3 22 22"><use href="#funnel" width="16" height="16"/></svg></button>
        <button class="plain cell mid" aria-label="Filter animated"><svg class="ic"><use href="#cam"/></svg></button>
        <button class="plain cell mid" aria-label="Filter driving"><svg class="ic"><use href="#gearf"/></svg></button>
        <button class="plain cell mid" aria-label="Filter selected"><svg class="ic"><use href="#funp"/></svg></button>
        <button class="plain cell mid" aria-label="Filter results"><svg class="ic"><use href="#grf"/></svg></button>
      </div>
      <div class="clip d-flex">
        <div class="vs d-flex flex-column align-items-center pt-1"><svg class="ic"><use href="#up" stroke="#111"/></svg><i></i><svg class="ic mt-auto"><use href="#dn" stroke="#111"/></svg></div>
        <div class="rows" id="mrows"></div>
      </div>
      <div class="mfoot"></div>
    </div>
    <div class="tl flex-grow-1">
      <div class="position-relative">
        <div class="ruler d-flex" id="ruler"></div>
        <div class="clip position-relative">
          <div class="grid d-flex position-absolute" id="grid"></div>
          <div class="rows position-relative" id="bars"></div>
          <div class="zooms position-absolute d-flex align-items-center justify-content-around"><button class="plain" aria-label="Zoom to fit"><svg class="ic"><use href="#zfit"/></svg></button><button class="plain" aria-label="Zoom in"><svg class="ic"><use href="#zin"/></svg></button><button class="plain" aria-label="Zoom out"><svg class="ic"><use href="#zout"/></svg></button></div>
        </div>
        <span class="head position-absolute" id="head"></span>
      </div>
      <div class="hs d-flex align-items-center"><svg class="ic"><use href="#lt" stroke="#111"/></svg><i class="ms-1"></i><svg class="ic ms-auto me-1"><use href="#rt" stroke="#111"/></svg></div>
    </div>
  </div>
  <div class="shtabs d-flex"><div class="d-flex ps-1 pe-1"><button class="plain nv" aria-label="First"><svg class="ic off"><use href="#lt"/></svg></button><button class="plain nv" aria-label="Previous"><svg class="ic off"><use href="#lt"/></svg></button><button class="plain nv" aria-label="Next"><svg class="ic off"><use href="#rt"/></svg></button><button class="plain nv" aria-label="Last"><svg class="ic off"><use href="#rt"/></svg></button></div><button class="plain">Model</button><button class="plain">3D Views</button><button class="plain on">Motion Study 1</button><button class="plain">Motion Study 2</button><div class="rail flex-grow-1"></div></div>
</section>

<footer>
  <div class="status d-flex align-items-center justify-content-end"><span>Under Defined</span><span>Editing Assembly</span><svg class="ic"><use href="#lightc"/></svg><span class="units dim opacity-50">IPS</span><span class="tri dim">▴</span><svg class="ic"><use href="#chip"/></svg></div>
  <div class="task d-flex">
    <div class="orbwrap"><button class="plain" aria-label="Start"><svg width="42" height="42"><use href="#orb"/></svg></button></div>
    <button class="plain app cell" aria-label="Task View"><svg class="ic"><use href="#tv"/></svg></button>
    <button class="plain app cell run" aria-label="File Explorer"><svg class="ic"><use href="#expl"/></svg></button>
    <button class="plain app cell" aria-label="Chrome"><svg class="ic"><use href="#chr"/></svg></button>
    <button class="plain app cell run" aria-label="Sticky Notes"><svg class="ic"><use href="#note"/></svg></button>
    <button class="plain app cell run" aria-label="Skype"><svg class="ic"><use href="#sky"/></svg></button>
    <button class="plain app cell cur" aria-label="SOLIDWORKS"><svg class="ic" viewBox="0 0 18 18" stroke="none"><path d="M1 3l5-2h11v12l-4 4H1z" fill="#b8191f" stroke="#600"/><text x="2" y="9" font-size="8" font-weight="700" fill="#fff" stroke="none" font-family="Liberation Sans, sans-serif">SW</text><text x="4" y="16" font-size="6" font-weight="700" fill="#fff" stroke="none" font-family="Liberation Sans, sans-serif">2017</text></svg></button>
    <button class="plain app cell run" aria-label="PowerPoint"><svg class="ic" viewBox="0 0 18 18"><path d="M9 3h7v12H9z" fill="#f2d8d0" stroke="#d04423"/><path d="M11 7h4M11 10h4" stroke="#d04423"/><path d="M1 3l10-2v16L1 15z" fill="#d04423" stroke="none"/><text x="3" y="12" font-size="9" font-weight="700" fill="#fff" stroke="none" font-family="Liberation Sans, sans-serif">P</text></svg></button>
    <button class="plain app cell run" aria-label="Snagit"><svg class="ic" viewBox="0 0 18 18"><path d="M1 1h16v16H1z" fill="#ec4b40" stroke="none"/><path d="M14 4H6L4 9l9 1-2 4H4" stroke="#fff" stroke-width="2"/><circle cx="13" cy="13" r="4" fill="#d8282c" stroke="none"/></svg></button>
    <div class="clock ms-auto text-end pe-1"><div>10:32 PM</div><div>9/19/2017</div></div>
  </div>
</footer>

<script>
const $ = id => document.getElementById(id);
const ic = (n, c = '') => `<svg class="ic ${c}"><use href="#${n}"/></svg>`;
const btn = (n, w, c = '') => `<button class="plain cell ${w}" aria-label="${n}">${ic(n, c)}</button>`;
const dd = '<span class="dd cell"></span>', sep = '<span class="sep"></span>';

$('quick').innerHTML = ['new','open','save','print','undo','arrow'].map(n => btn(n, '', n == 'print' ? '' : 'off') + dd).join('')
  + btn('light', 'wide', 'off') + btn('opts', 'wide', 'off') + btn('gear', 'wide') + dd;

$('ribbon').innerHTML = [['chip','CircuitWorks'],['ball','PhotoView<br>360',1],['scan','ScanTo3D',1],['motion','SOLIDWORKS<br>Motion'],['route','SOLIDWORKS<br>Routing'],['sim','SOLIDWORKS<br>Simulation'],['bolt','SOLIDWORKS<br>Toolbox'],['tol','TolAnalyst',1],['flow','SOLIDWORKS<br>Flow<br>Simulation'],['plas','SOLIDWORKS<br>Plastics'],['insp','SOLIDWORKS<br>Inspection'],['mbd','SOLIDWORKS<br>MBD SNL']]
  .map(([i, t, s]) => `<button class="plain d-flex flex-column align-items-center ${s ? 'slim' : ''}">${ic(i)}<span>${t}</span></button>`).join('');

$('headsup').innerHTML = ['zfit','zarea','prev','sect','c1','c2','c3','c4','c5','c6','iso','norm','style'].map(n => btn(n, 'wide')).join('')
  + dd + btn('eye', 'wide') + dd + btn('ball', 'wide', 'off') + btn('scn', 'wide') + dd + btn('mon', 'wide') + dd;

$('pane').innerHTML = ['up','new','open','sheet','disp','opts'].map(n => `<button class="plain ${n == 'disp' ? 'on' : ''}" aria-label="${n}">${ic(n)}</button>`).join('');

const esc = s => s.replace(/</g, '&lt;');
const st = ' (Default<<Default>_Display State 1>)';
const tree = [['hist','History',1],['sens','Sensors'],['anno','Annotations',1],['eqn','Equations'],['plane','Front Plane',0,'plane'],['plane','Top Plane',0,'plane'],['plane','Right Plane',0,'plane'],['orig','Origin',0,'orig'],
 ['part','(f) base<1>' + st,1,'part','#888'],['part','(-) bracket<1> (right<<Default>_Display State 1>)',1,'part','#7be37d'],['part','(-) bracket<2> (left<<Default>_Display State 1>)',1,'part','#7be37d'],['part','(-) shaft1<2>' + st,1,'part','#7a78f0'],['part','(-) shaft2<2>' + st,1,'part','#7a78f0'],
 ...['house<1>','center<1>','house<2>','house<3>','center<2>','house<4>'].map(n => ['part','(-) ujoint ' + n + st,1,'part','#eeb078']), ['mates2','Mates',1]];
const swatch = c => `<svg width="14" height="14" viewBox="0 0 14 14"><path d="M.5.5h13v13H.5z" fill="#f4f4f4" stroke="#555"/><circle cx="7" cy="7" r="4.500" fill="#b9bbbd"/><path d="M4 10a4.500 4.500 0 0 1 6-6z" fill="${c}"/><path d="M1 13L13 1" stroke="#333"/></svg>`;
$('tree').innerHTML = `<div class="cols"><div class="nm root">${ic('root')}<span class="lbl">DRIVESHAFT PHASING  (Default&lt;Display State-1&gt;)</span></div><span></span><span></span><span></span><span></span></div>`
  + tree.map(([i, t, e, v, c]) => `<div class="cols"><div class="nm"><span class="exp ${e ? 'has' : ''}"></span>${ic(i)}<span class="lbl">${esc(t)}</span></div><span>${v ? ic(v) : ''}</span><span>${c ? ic('cube') : ''}</span><span>${c ? swatch(c) : ''}</span><span></span></div>`).join('');

$('mt1').innerHTML = btn('calc','mid','off') + btn('pstart','mid','off') + `<button class="plain cell mid position-relative" aria-label="Play">${ic('play','off')}<svg class="mouse position-absolute" viewBox="0 0 11 16"><path d="M1 1v11l3-2 2 5 2-1-2-5h4z" fill="#fff" stroke="#333" stroke-width=".8"/></svg></button>`
  + '<button class="plain cell mid" aria-label="Stop"><svg width="7" height="7"><rect width="7" height="7" fill="#111"/></svg></button>';
$('mt2').innerHTML = '<button class="plain cell mid" aria-label="Playback mode"><svg width="12" height="8" fill="none" stroke="#111" stroke-width="1.500"><path d="M0 4h9M7 1l3 3-3 3"/></svg></button><span class="dd cell"></span>'
  + btn('film','','off') + sep + btn('box','mid','off') + sep + btn('leaf','mid','off') + btn('leafp','mid','off') + sep
  + ['mot','spr','damp','frc','con','grav'].map(n => btn(n,'mid','off')).join('') + sep + btn('res','mid','off') + sep + btn('gear','mid','off') + sep
  + btn('sim','mid','off') + btn('box','mid','off') + btn('partg','mid','off') + dd + sep;

const rows = [['mates','Mates (11 Redundancies)'],['wid','Width1 (bracket<1> ,b'],['conc','Concentric1 (base<1>,'],['wid','Width2 (bracket<2> ,b'],['conc','Concentric2 (base<1>,'],['ang','Angle3 (bracket<1>,ba'],['ang','Angle4 (bracket<2>,ba'],['wid','Width6 (shaft2<2> ,sh'],['wid','Width7 (shaft2<2> ,sh'],['conc','Concentric12 (shaft']];
$('mrows').innerHTML = rows.map(([i, t], n) => `<div class="${i == 'wid' ? 'dim' : ''}"><span class="${n ? 'in1' : 'in0'}"></span><span class="exp ${i == 'ang' ? 'has' : ''}">${n ? '' : '<svg width="6" height="4"><path d="M0 0h6L3 4z" fill="#666"/></svg>'}</span>${ic(i)}<span class="lbl">${esc(t)}</span></div>`).join('');
$('bars').innerHTML = rows.map((r, n) => `<div class="d-flex align-items-center position-relative">${n ? '<span class="bar"></span><svg class="key position-absolute" viewBox="0 0 7 11"><path d="M3.500 0L7 5.500 3.500 11 0 5.500z"/></svg>' : ''}</div>`).join('');
const ticks = '<svg>' + [1,2,3,4,5,6,7,8,9].map(k => `<path d="M${Math.round(k * 5.1) - 0.5} 7V${k == 5 ? 0 : 2}"/>`).join('') + '</svg>';
const count = Math.ceil(($('ruler').clientWidth - 34) / 51);
for (let s = 0; s < count; s++) {
  $('ruler').insertAdjacentHTML('beforeend', `<div class="sec ${s < 5 ? 'y' : ''}">${s} sec${ticks}</div>`);
  $('grid').insertAdjacentHTML('beforeend', '<i></i>');
}
$('head').style.left = Math.round(34 + 2.84 * 51) + 'px';

/* result plots: window width, body height, axis box and curve */
const wave = Array.from({length: 101}, (_, k) => [k / 20, 91 - 14 * Math.sin(Math.PI * k / 20)]);
wave[0][1] = 87;
const flat = Array.from({length: 126}, (_, k) => [k / 25, 90 + (k > 45 && k < 92 ? 0 : (k % 3 ? 0.6 : -1.2))]);
const meas = [[0,0],[.03,92],[.12,93],[.27,80],[.43,75],[.65,75],[.8,79],[.9,80],[1.02,88],[1.22,98],[1.42,105],[1.81,105],[2,91],[2.23,80],[2.47,78],[2.89,78],[2.96,87],[3.1,92],[3.27,101],[3.45,105],[3.76,105]];
const defs = [
 {t:'Plot4',v:4,w:301,h:123,me:4,x0:38,x1:285,y0:87,y1:16,c:flat,frame:1},
 {t:'Plot6',v:8,w:303,h:116,me:0,x0:37,x1:288,y0:80,y1:16,c:wave,frame:1},
 {t:'Plot7',v:9,w:301,h:117,me:0,x0:38,x1:285,y0:82,y1:16,c:meas}];
$('plots').innerHTML = defs.map(p => {
  const X = t => p.x0 + (p.x1 - p.x0) * t / 5, Y = v => p.y0 + (p.y1 - p.y0) * v / 120;
  let g = '';
  for (let v = 10; v <= 120; v += 10) g += `<path d="M${p.x0} ${Y(v)}H${p.x1}" stroke="#dadada" stroke-dasharray="4 2"/><path d="M${p.x0 - (v % 20 ? 2 : 3)} ${Y(v)}h${v % 20 ? 4 : 6}" stroke="#333"/>`;
  for (let k = 0; k <= 20; k++) { const t = k / 4; if (k % 2 == 0) g += `<path d="M${X(t)} ${p.y1}V${p.y0}" stroke="#dadada" stroke-dasharray="4 2"/><text x="${X(t)}" y="${p.y0 + 15}" text-anchor="middle">${t.toFixed(2)}</text>`; g += `<path d="M${X(t)} ${p.y0 - (k % 2 ? 1 : 3)}v${k % 2 ? 2 : 6}" stroke="#555"/>`; }
  for (let v = 0; v <= 120; v += 20) g += `<text x="${p.x0 - 8}" y="${Y(v) + 3}" text-anchor="end">${v}</text>`;
  g += `<path d="M${p.x0} ${p.y1}V${p.y0}H${p.x1}" stroke="#555"/>` + (p.frame ? `<path d="M${p.x0} ${p.y1}H${p.x1}V${p.y0}" stroke="#777"/>` : '');
  g += `<path d="M${X(2.87)} ${p.y1}V${p.y0}" stroke="#b0444c"/><rect x="${p.x0 - 2}" y="${p.y1 - 2}" width="5" height="5" fill="#000"/><rect x="${p.x0 - 2}" y="${p.y0 - 2}" width="5" height="5" fill="#000"/>`;
  g += `<polyline points="${p.c.map(([t, v]) => X(t) + ',' + Y(v)).join(' ')}" stroke="#1457a0" stroke-width="2"/>`;
  g += `<text x="${(p.x0 + p.x1) / 2}" y="${p.y0 + 25}" text-anchor="middle">Time (sec)</text><text class="yt" transform="translate(13 ${p.y0 + 16}) rotate(-90)">Angular Velocity${p.v} (deg/sec)</text>`;
  return `<article class="plotwin" style="width:${p.w}px;margin-right:${p.me}px"><header class="d-flex align-items-center justify-content-between"><span>${p.t}</span><button class="plain" aria-label="Close">×</button></header><div class="body"><svg fill="none" viewBox="0 0 ${p.w - 2} ${p.h - 2}">${g}</svg></div></article>`;
}).join('');
</script>
<script src="https://cdn.jsdelivr.net/npm/bootstrap@5.3.0/dist/js/bootstrap.bundle.min.js"></script>
</body>
</html>
